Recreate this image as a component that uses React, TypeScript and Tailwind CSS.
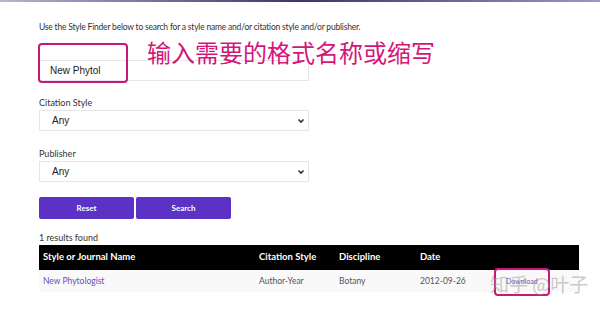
import React from "react";

const COLS = "grid grid-cols-[216px_80px_81px_80px_1fr] items-center pl-[4px]";

export default function App() {
  return (
    <div className="relative w-[600px] h-[312px] overflow-hidden bg-white font-['Lato','Noto_Sans',sans-serif] text-[#333]">
      <div className="h-[2px] bg-gradient-to-r from-[#b9b4d2] via-[#3e3766] to-[#9d97c4]" />

      <div className="pl-[39px]">
        <p className="pt-[18px] text-[8.5px] leading-[14px] tracking-[-0.2px] text-[#333]">
          Use the Style Finder below to search for a style name and/or citation style and/or publisher.
        </p>

        <div className="mt-[26px] flex h-[21px] w-[270px] items-center border border-[#e6e6e6] pl-[10px] font-['Liberation_Sans',Arial,sans-serif] text-[10px] text-[#222]">
          New Phytol
        </div>

        <p className="mt-[15px] text-[9px] leading-[14px]">Citation Style</p>
        <div className="flex h-[21px] w-[270px] items-center justify-between border border-[#e6e6e6] pl-[12px] pr-[3px] font-['Liberation_Sans',Arial,sans-serif] text-[10px] text-[#222]">
          <span>Any</span>
          <svg width="8" height="6" viewBox="0 0 8 6"><path d="M1.5 1.5 L4 4 L6.5 1.5" fill="none" stroke="#333" strokeWidth="1.6" /></svg>
        </div>

        <p className="mt-[16px] text-[9px] leading-[14px]">Publisher</p>
        <div className="flex h-[21px] w-[270px] items-center justify-between border border-[#e6e6e6] pl-[12px] pr-[3px] font-['Liberation_Sans',Arial,sans-serif] text-[10px] text-[#222]">
          <span>Any</span>
          <svg width="8" height="6" viewBox="0 0 8 6"><path d="M1.5 1.5 L4 4 L6.5 1.5" fill="none" stroke="#333" strokeWidth="1.6" /></svg>
        </div>

        <div className="mt-[15px] flex gap-[2px]">
          <button className="h-[22px] w-[95px] rounded-[2px] bg-[#5b31c6] text-[8px] font-bold text-white">Reset</button>
          <button className="h-[22px] w-[95px] rounded-[2px] bg-[#5b31c6] text-[8px] font-bold text-white">Search</button>
        </div>

        <p className="mt-[12px] text-[9px] leading-[14px]">1 results found</p>

        <div className="w-[540px]">
          <div className={`${COLS} h-[25px] bg-black text-[9.5px] font-bold text-white`}>
            <span>Style or Journal Name</span>
            <span>Citation Style</span>
            <span>Discipline</span>
            <span>Date</span>
            <span />
          </div>
          <div className={`${COLS} h-[22px] bg-[#f9f9f9] text-[8.5px] text-[#555]`}>
            <span className="text-[#6b4fb8]">New Phytologist</span>
            <span>Author-Year</span>
            <span>Botany</span>
            <span>2012-09-26</span>
            <span className="pl-[6px] text-[7px] text-[#6b4fb8]">Download</span>
          </div>
        </div>
      </div>

      <div className="absolute left-[38px] top-[43px] h-[40px] w-[90px] rounded-[4px] border-2 border-[#c8177a]" />
      <p className="absolute left-[147px] top-[37px] font-['Noto_Sans_CJK_SC',sans-serif] text-[24px] leading-[30px] text-[#d4157a]">
        输入需要的格式名称或缩写
      </p>

      <div className="absolute left-[494px] top-[268px] h-[28px] w-[56px] rounded-[4px] border-2 border-[#c8177a]" />
      <p className="absolute left-[490px] top-[271px] font-['Noto_Sans_CJK_SC',sans-serif] text-[19px] leading-[26px] text-[#9a9a9a] opacity-50">
        知乎 @叶子
      </p>
    </div>
  );
}
